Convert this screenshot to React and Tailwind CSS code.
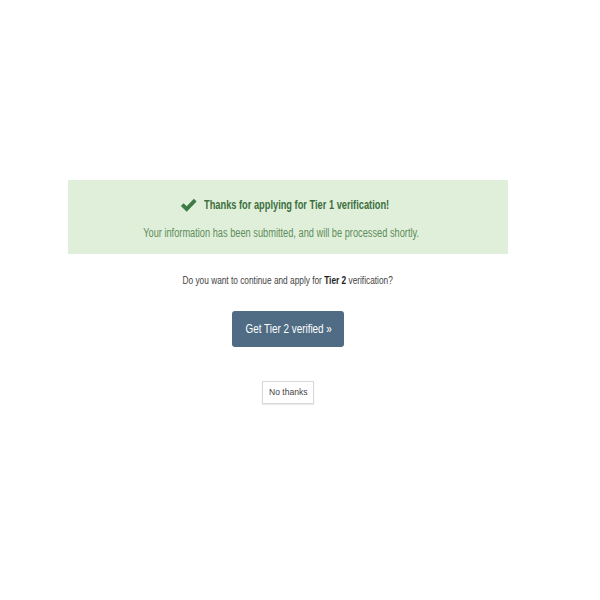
import React from 'react';

const font = { fontFamily: '"Liberation Sans", Arial, sans-serif' };

const App = () => {
  return (
    <div className="w-[600px] h-[600px] bg-white pr-[24px]" style={font}>
      <div className="flex flex-col items-center pt-[180px]">
        <div className="w-[440px] h-[74px] bg-[#e0efd9] flex flex-col items-center pt-[16px]">
          <div className="flex items-center gap-[7px]">
            <svg width="17" height="16" viewBox="0 0 19 17">
              <path d="M1 9.5 L4 6.5 L7.5 10 L15.5 1.5 L18.5 4.5 L7.5 16 Z" fill="#3b7a45" />
            </svg>
            <span className="inline-block origin-left scale-x-[0.772] mr-[-47px] text-[12px] font-bold text-[#3c6e3f] whitespace-nowrap">Thanks for applying for Tier 1 verification!</span>
          </div>
          <p className="mt-[10px] inline-block scale-x-[0.77] -translate-x-[7px] text-[12px] text-[#5f8c5c] whitespace-nowrap">Your information has been submitted, and will be processed shortly.</p>
        </div>
        <p className="mt-[19px] inline-block scale-x-[0.83] text-[10px] text-[#444] whitespace-nowrap">
          Do you want to continue and apply for <b className="text-[#222]">Tier 2</b> verification?
        </p>
        <button className="mt-[23px] w-[112px] h-[36px] rounded-[3px] bg-[#4f6c84] text-white text-[13px]">
          <span className="inline-block scale-x-[0.76] whitespace-nowrap">Get Tier 2 verified »</span>
        </button>
        <button className="mt-[34px] w-[52px] h-[23px] border border-[#d8d8d8] bg-white text-[9px] text-[#444] shadow-[0_1px_1px_rgba(0,0,0,0.08)]">
          <span className="inline-block scale-x-[0.95] whitespace-nowrap">No thanks</span>
        </button>
      </div>
    </div>
  );
};

export default App;
